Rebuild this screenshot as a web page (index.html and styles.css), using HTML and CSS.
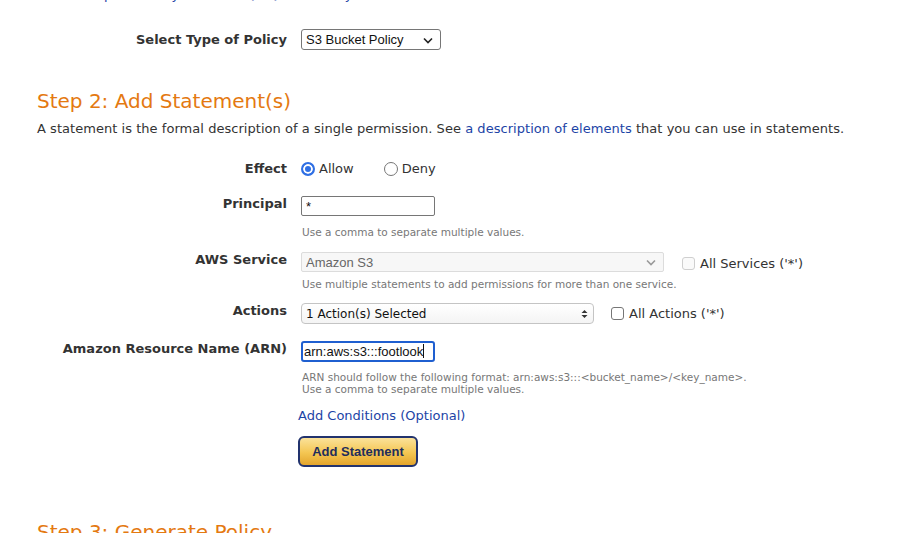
FILE: index.html
```html
<!DOCTYPE html>
<html>
<head>
<meta charset="utf-8">
<link rel="stylesheet" href="styles.css">
</head>
<body>
<div class="page">
  <p class="intro-tail">a <a href="#">VPC Endpoint Policy</a>, and an <a href="#">SQS Queue Policy</a>.</p>

  <div class="row row-type">
    <label class="label">Select Type of Policy</label>
    <span class="select-wrap sel-type">
      <select class="select"><option>S3 Bucket Policy</option></select>
      <svg class="chev" width="10" height="7" viewBox="0 0 10 7"><path d="M1 1.5 5 5.5 9 1.5" fill="none" stroke="#222" stroke-width="1.6"/></svg>
    </span>
  </div>

  <h2 class="step">Step 2: Add Statement(s)</h2>
  <p class="desc">A statement is the formal description of a single permission. See <a href="#">a description of elements</a> that you can use in statements.</p>

  <div class="row row-effect">
    <label class="label">Effect</label>
    <div class="radios">
      <label class="radio-opt"><input type="radio" name="effect" class="radio" checked> Allow</label>
      <label class="radio-opt"><input type="radio" name="effect" class="radio"> Deny</label>
    </div>
  </div>

  <div class="row row-principal">
    <label class="label">Principal</label>
    <input class="text-input" type="text" value="*">
  </div>
  <p class="hint hint-principal">Use a comma to separate multiple values.</p>

  <div class="row row-service">
    <label class="label">AWS Service</label>
    <span class="select-wrap sel-service">
      <select class="select select-disabled" disabled><option>Amazon S3</option></select>
      <svg class="chev" width="10" height="7" viewBox="0 0 10 7"><path d="M1 1.5 5 5.5 9 1.5" fill="none" stroke="#999" stroke-width="1.6"/></svg>
    </span>
    <label class="check-opt check-services"><input type="checkbox" class="check" disabled> All Services ('*')</label>
  </div>
  <p class="hint hint-service">Use multiple statements to add permissions for more than one service.</p>

  <div class="row row-actions">
    <label class="label">Actions</label>
    <span class="select-wrap sel-actions">
      <select class="select select-actions"><option>1 Action(s) Selected</option></select>
      <svg class="updown" width="7" height="10" viewBox="0 0 7 10"><path d="M0.5 4 3.5 1 6.5 4Z M0.5 6 3.5 9 6.5 6Z" fill="#333"/></svg>
    </span>
    <label class="check-opt check-actions"><input type="checkbox" class="check"> All Actions ('*')</label>
  </div>

  <div class="row row-arn">
    <label class="label">Amazon Resource Name (ARN)</label>
    <div class="text-input focused">arn:aws:s3:::footlook<span class="caret"></span></div>
  </div>
  <p class="hint hint-arn">ARN should follow the following format: arn:aws:s3:::&lt;bucket_name&gt;/&lt;key_name&gt;.<br>Use a comma to separate multiple values.</p>

  <a href="#" class="cond-link">Add Conditions (Optional)</a>
  <div class="btn-row"><button class="btn">Add Statement</button></div>

  <h2 class="step step3">Step 3: Generate Policy</h2>
</div>
</body>
</html>
```
FILE: styles.css
```css
* { box-sizing: border-box; }
html, body { margin: 0; padding: 0; background: #fff; }
body {
  font-family: "DejaVu Sans", Verdana, sans-serif;
  font-size: 13px;
  color: #333;
  overflow: hidden;
}
a { color: #1c44a6; text-decoration: none; }
p { margin: 0; }

.page { padding-left: 37px; }

.intro-tail { margin-top: -13px; line-height: 16px; letter-spacing: 0.04px; }

.row { display: flex; align-items: flex-start; }
.label {
  width: 250px;
  flex: none;
  margin-right: 14px;
  text-align: right;
  font-weight: bold;
  line-height: 16px;
  color: #333;
}

.row-type { margin-top: 26px; align-items: center; }

.select-wrap { position: relative; display: inline-block; flex: none; }
.select {
  -webkit-appearance: none;
  appearance: none;
  display: block;
  width: 100%;
  font-family: "Liberation Sans", Arial, sans-serif;
  font-size: 13px;
  color: #111;
  background: #fff;
  border: 1px solid #767676;
  border-radius: 3px;
  padding: 0 20px 0 4px;
  margin: 0;
}
.chev, .updown { position: absolute; top: 50%; pointer-events: none; }
.chev { right: 8px; margin-top: -3px; }
.updown { right: 6px; margin-top: -5px; }

.sel-type { width: 140px; height: 21px; }
.sel-type .select { height: 21px; }

.step {
  margin: 39px 0 0;
  font-size: 20px;
  line-height: 24px;
  font-weight: normal;
  color: #e47911;
}
.desc { margin-top: 8px; line-height: 16px; letter-spacing: 0.04px; }

.row-effect { margin-top: 22px; align-items: center; height: 20px; }
.radios { display: flex; align-items: center; }
.radio-opt { display: flex; align-items: center; line-height: 16px; }
.radio-opt + .radio-opt { margin-left: 30px; }
.radio {
  -webkit-appearance: none;
  appearance: none;
  width: 14px;
  height: 14px;
  margin: 0 4px 0 0;
  border-radius: 50%;
  border: 1px solid #767676;
  background: #fff;
}
.radio:checked {
  border: 2px solid #2f6fe4;
  background: #2f6fe4;
  box-shadow: inset 0 0 0 2px #fff;
}

.text-input {
  display: block;
  width: 134px;
  height: 20px;
  padding: 0 4px;
  margin: 0;
  border: 1px solid #767676;
  border-radius: 2px;
  font-family: "Liberation Sans", Arial, sans-serif;
  font-size: 13px;
  color: #111;
  background: #fff;
  flex: none;
}
.row-principal { margin-top: 17px; }

.hint {
  margin-left: 264px;
  padding-left: 1px;
  font-size: 10.5px;
  line-height: 14px;
  color: #777;
}
.hint-principal { margin-top: 9px; }

.row-service { margin-top: 13px; }
.sel-service { width: 363px; height: 20px; }
.select-disabled {
  height: 20px;
  background: #f7f7f7;
  border-color: #dcdcdc;
  color: #666;
  opacity: 1;
  border-radius: 2px;
}
.check-opt { display: flex; align-items: center; line-height: 20px; color: #333; }
.check {
  -webkit-appearance: none;
  appearance: none;
  width: 13px;
  height: 13px;
  margin: 0 5px 0 0;
  border: 1px solid #767676;
  border-radius: 3px;
  background: #fff;
}
.check:disabled { border-color: #cfcfcf; background: #fafafa; }
.check-services { margin-left: 18px; margin-top: 3px; line-height: 17px; }
.hint-service { margin-top: 5px; }

.row-actions { margin-top: 12px; }
.sel-actions { width: 293px; height: 21px; }
.select-actions {
  height: 21px;
  font-family: "DejaVu Sans", Verdana, sans-serif;
  font-size: 12px;
  border-color: #c4c4c4;
  border-radius: 4px;
  background: linear-gradient(#fff, #f4f4f4);
  padding-left: 4px;
}
.check-actions { margin-left: 17px; line-height: 21px; }

.row-arn { margin-top: 17px; }
.focused {
  height: 21px;
  border: 2px solid #1f5fd0;
  border-radius: 3px;
  padding: 0 0 0 1px;
  line-height: 17px;
  white-space: nowrap;
}
.caret {
  display: inline-block;
  width: 1px;
  height: 14px;
  background: #111;
  vertical-align: -2px;
}
.hint-arn { margin-top: 9px; line-height: 12px; }

.cond-link {
  display: inline-block;
  margin: 13px 0 0 261px;
  line-height: 16px;
  color: #1c44a6;
}

.btn-row { margin: 12px 0 0 261px; }
.btn {
  display: block;
  width: 120px;
  height: 31px;
  padding: 0;
  border: 2px solid #22336e;
  border-radius: 6px;
  background: linear-gradient(#fbe29a, #f4c652 55%, #e3a52d);
  font-family: "Liberation Sans", Arial, sans-serif;
  font-weight: bold;
  font-size: 13px;
  color: #1f2d5c;
}

.step3 { margin-top: 53px; }
```
